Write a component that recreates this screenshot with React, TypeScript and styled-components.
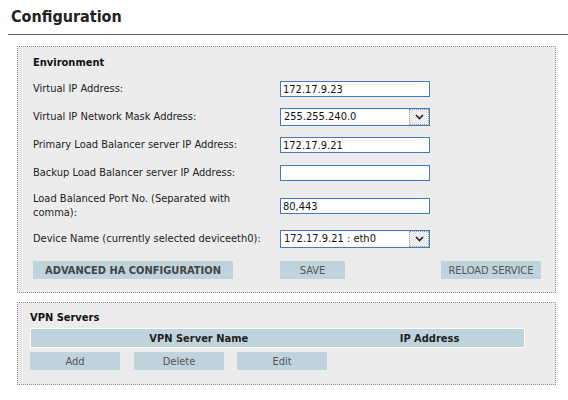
import React from 'react';
import styled, { createGlobalStyle } from 'styled-components';

const GlobalStyle = createGlobalStyle`
  html, body { margin: 0; padding: 0; background: #fff; }
  body {
    font-family: Tahoma, "DejaVu Sans Condensed", "DejaVu Sans", sans-serif;
    font-size: 11px;
    color: #222;
  }
`;

const Page = styled.div`
  padding-left: 8px;
`;

const Header = styled.div`
  box-sizing: border-box;
  height: 35px;
  padding: 7px 0 0 3px;
  border-bottom: 1px solid #666;
  h1 {
    margin: 0;
    font-size: 16px;
    line-height: 20px;
    font-weight: bold;
    color: #222;
  }
`;

interface PanelProps {
  top: number;
  pad: string;
}
const Panel = styled.div<PanelProps>`
  margin: ${(p) => p.top}px 12px 0 9px;
  padding: ${(p) => p.pad};
  background: #ececec;
  border: 1px dotted #8f8f8f;
`;

const Heading = styled.div<{ gap: number }>`
  font-weight: bold;
  line-height: 14px;
  margin-bottom: ${(p) => p.gap}px;
  color: #111;
`;

const Row = styled.div<{ h: number }>`
  display: flex;
  align-items: center;
  height: ${(p) => p.h}px;
`;

const Label = styled.div`
  width: 247px;
  padding-right: 3px;
  box-sizing: border-box;
  line-height: 14px;
  color: #222;
`;

const TextInput = styled.input`
  box-sizing: border-box;
  width: 150px;
  height: 16px;
  margin: 0;
  padding: 0 2px;
  border: 1px solid #3f7cbf;
  background: #fff;
  font-family: inherit;
  font-size: 11px;
  color: #111;
  outline: none;
`;

const SelectBox = styled.div`
  box-sizing: border-box;
  display: flex;
  align-items: stretch;
  width: 150px;
  height: 18px;
  border: 1px solid #3f7cbf;
  background: #fff;
`;

const SelectValue = styled.span`
  flex: 1;
  padding-left: 3px;
  line-height: 16px;
  color: #111;
`;

const SelectArrow = styled.span`
  width: 18px;
  display: flex;
  align-items: center;
  justify-content: center;
  background: #ececec;
  border: 1px dotted #9a9a9a;
`;

const ButtonRow = styled.div<{ top: number }>`
  display: flex;
  align-items: center;
  margin-top: ${(p) => p.top}px;
`;

interface ButtonProps {
  w: number;
  strong?: boolean;
  left?: number;
}
const Button = styled.button<ButtonProps>`
  box-sizing: border-box;
  width: ${(p) => p.w}px;
  height: 18px;
  margin: 0 0 0 ${(p) => p.left || 0}px;
  padding: 0;
  border: none;
  background: #bfd3dc;
  font-family: inherit;
  font-size: 11px;
  font-weight: ${(p) => (p.strong ? 'bold' : 'normal')};
  color: ${(p) => (p.strong ? '#444' : '#555')};
  cursor: pointer;
`;

const Spacer = styled.div`
  width: 247px;
`;

const PushRight = styled.div`
  margin-left: auto;
`;

const Table = styled.table`
  width: 494px;
  table-layout: fixed;
  border-collapse: collapse;
  border: 1px solid #fff;
  th {
    height: 18px;
    padding: 0;
    border: none;
    background: #bfd3dd;
    font-weight: bold;
    font-size: 11px;
    color: #222;
    text-align: center;
  }
`;

const Chevron = () => (
  <svg width="9" height="6" viewBox="0 0 9 6">
    <path d="M1 1 L4.5 4.5 L8 1" fill="none" stroke="#222" strokeWidth="1.6" />
  </svg>
);

function Select({ value }: { value: string }) {
  return (
    <SelectBox>
      <SelectValue>{value}</SelectValue>
      <SelectArrow>
        <Chevron />
      </SelectArrow>
    </SelectBox>
  );
}

export default function App() {
  return (
    <Page>
      <GlobalStyle />
      <Header>
        <h1>Configuration</h1>
      </Header>

      <Panel top={11} pad="9px 14px 13px 15px">
        <Heading gap={5}>Environment</Heading>
        <Row h={28}>
          <Label>Virtual IP Address:</Label>
          <TextInput defaultValue="172.17.9.23" />
        </Row>
        <Row h={28}>
          <Label>Virtual IP Network Mask Address:</Label>
          <Select value="255.255.240.0" />
        </Row>
        <Row h={28}>
          <Label>Primary Load Balancer server IP Address:</Label>
          <TextInput defaultValue="172.17.9.21" />
        </Row>
        <Row h={28}>
          <Label>Backup Load Balancer server IP Address:</Label>
          <TextInput defaultValue="" />
        </Row>
        <Row h={38}>
          <Label>Load Balanced Port No. (Separated with comma):</Label>
          <TextInput defaultValue="80,443" />
        </Row>
        <Row h={28}>
          <Label>Device Name (currently selected deviceeth0):</Label>
          <Select value="172.17.9.21 : eth0" />
        </Row>
        <ButtonRow top={8}>
          <Spacer>
            <Button w={200} strong>ADVANCED HA CONFIGURATION</Button>
          </Spacer>
          <Button w={65}>SAVE</Button>
          <PushRight>
            <Button w={100}>RELOAD SERVICE</Button>
          </PushRight>
        </ButtonRow>
      </Panel>

      <Panel top={9} pad="8px 12px 14px 12px">
        <Heading gap={3}>VPN Servers</Heading>
        <Table>
          <colgroup>
            <col style={{ width: 336 }} />
            <col style={{ width: 126 }} />
            <col style={{ width: 32 }} />
          </colgroup>
          <thead>
            <tr>
              <th>VPN Server Name</th>
              <th>IP Address</th>
              <th />
            </tr>
          </thead>
        </Table>
        <ButtonRow top={4}>
          <Button w={90}>Add</Button>
          <Button w={90} left={14}>Delete</Button>
          <Button w={90} left={13}>Edit</Button>
        </ButtonRow>
      </Panel>
    </Page>
  );
}
